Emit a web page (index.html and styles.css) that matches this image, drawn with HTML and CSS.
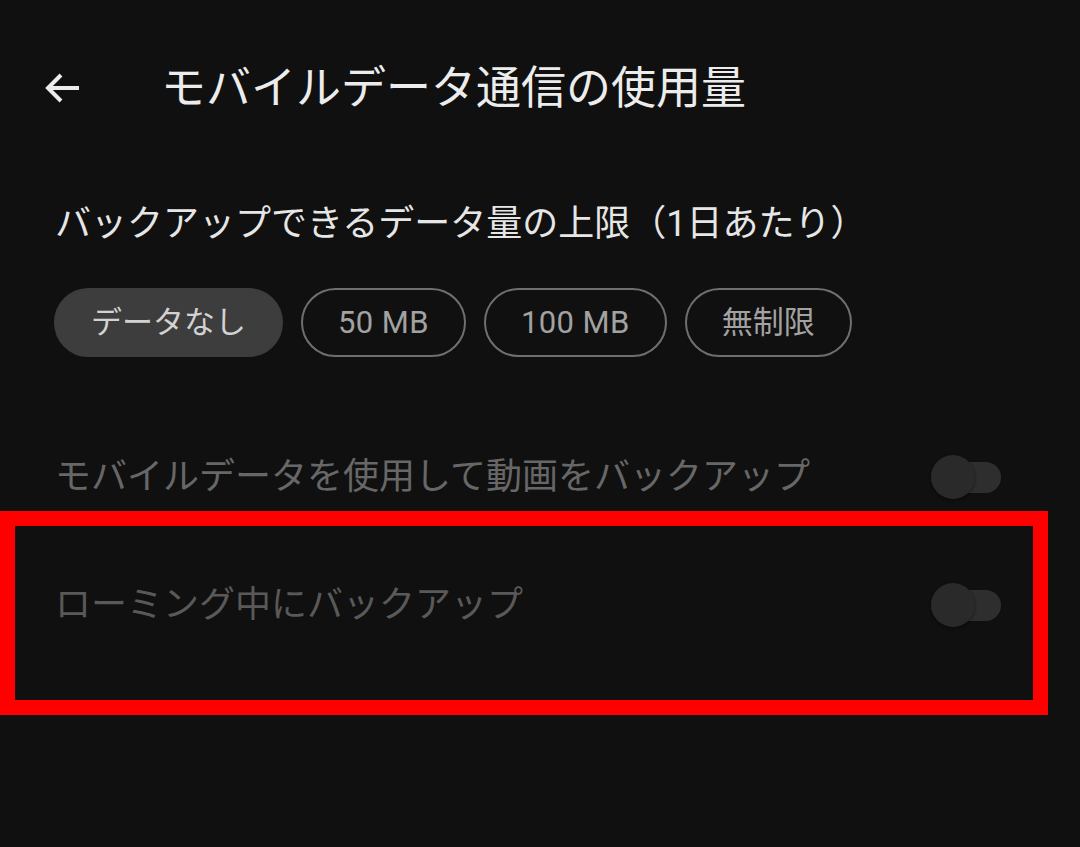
FILE: index.html
```html
<!DOCTYPE html>
<html lang="ja">
<head>
  <meta charset="UTF-8">
  <meta name="viewport" content="width=device-width, initial-scale=1.0">
  <title>モバイルデータ通信の使用量</title>
  <link rel="stylesheet" href="styles.css">
</head>
<body>
  <header class="header">
    <svg class="back" width="36" height="32" viewBox="0 0 36 32" aria-hidden="true">
      <path d="M35 16H4 M17 3 L4 16 L17 29" fill="none" stroke="#ececec" stroke-width="4" stroke-linejoin="miter"/>
    </svg>
    <h1 class="title">モバイルデータ通信の使用量</h1>
  </header>

  <main class="content">
    <h2 class="section-title">バックアップできるデータ量の上限（1日あたり）</h2>

    <div class="chips">
      <button class="chip selected">データなし</button>
      <button class="chip latin">50 MB</button>
      <button class="chip latin">100 MB</button>
      <button class="chip">無制限</button>
    </div>

    <div class="setting">
      <span class="label">モバイルデータを使用して動画をバックアップ</span>
      <span class="switch"><span class="thumb"></span></span>
    </div>
    <div class="setting dim">
      <span class="label">ローミング中にバックアップ</span>
      <span class="switch"><span class="thumb"></span></span>
    </div>
  </main>

  <!-- highlight around the roaming row -->
  <div class="highlight"></div>
</body>
</html>
```

FILE: styles.css
```css
body {
  margin: 0;
  padding: 0;
  background-color: #101010;
  font-family: Roboto, "Noto Sans CJK JP", sans-serif;
  color: #e8e8e8;
  width: 1080px;
  height: 847px;
  overflow: hidden;
  position: relative;
}

.header {
  display: flex;
  align-items: center;
  height: 178px;
  padding-left: 44px;
}

.back {
  display: block;
  flex-shrink: 0;
  margin-top: -2px;
}

.title {
  margin: 0 0 0 81px;
  font-size: 45px;
  font-weight: 400;
  line-height: 60px;
  color: #ececec;
}

.content {
  padding: 0 79px 0 55px;
}

.section-title {
  margin: 0;
  padding-top: 22px;
  font-size: 36px;
  font-weight: 400;
  line-height: 48px;
  color: #e6e6e6;
}

.chips {
  display: flex;
  gap: 18px;
  margin-top: 40px;
  margin-left: -1px;
}

.chip {
  height: 69px;
  padding: 0 35px;
  border: 2px solid #6f6f6f;
  border-radius: 35px;
  background: transparent;
  color: #a2a2a2;
  font-family: Roboto, "Noto Sans CJK JP", sans-serif;
  font-size: 31px;
  line-height: 1;
}

.chip.latin {
  letter-spacing: 0.4px;
}

.chip.selected {
  border-color: #3d3d3d;
  background-color: #3d3d3d;
  color: #d2d2d2;
}

.chips + .setting {
  margin-top: 56px;
}

.setting {
  display: flex;
  align-items: center;
  justify-content: space-between;
  height: 128px;
}

.label {
  font-size: 36px;
  color: #676767;
  line-height: 48px;
}

.setting.dim .label {
  color: #595959;
}

.switch {
  position: relative;
  width: 70px;
  height: 31px;
  border-radius: 16px;
  background-color: #2e2e2e;
}

.thumb {
  position: absolute;
  left: 0;
  top: -7px;
  width: 44px;
  height: 44px;
  border-radius: 50%;
  background-color: #2a2a2a;
  box-shadow: 0 1px 3px rgba(0, 0, 0, 0.5);
}

.highlight {
  position: absolute;
  left: 0;
  top: 511px;
  width: 1048px;
  height: 204px;
  box-sizing: border-box;
  border: 15px solid #ff0000;
  pointer-events: none;
}
```
